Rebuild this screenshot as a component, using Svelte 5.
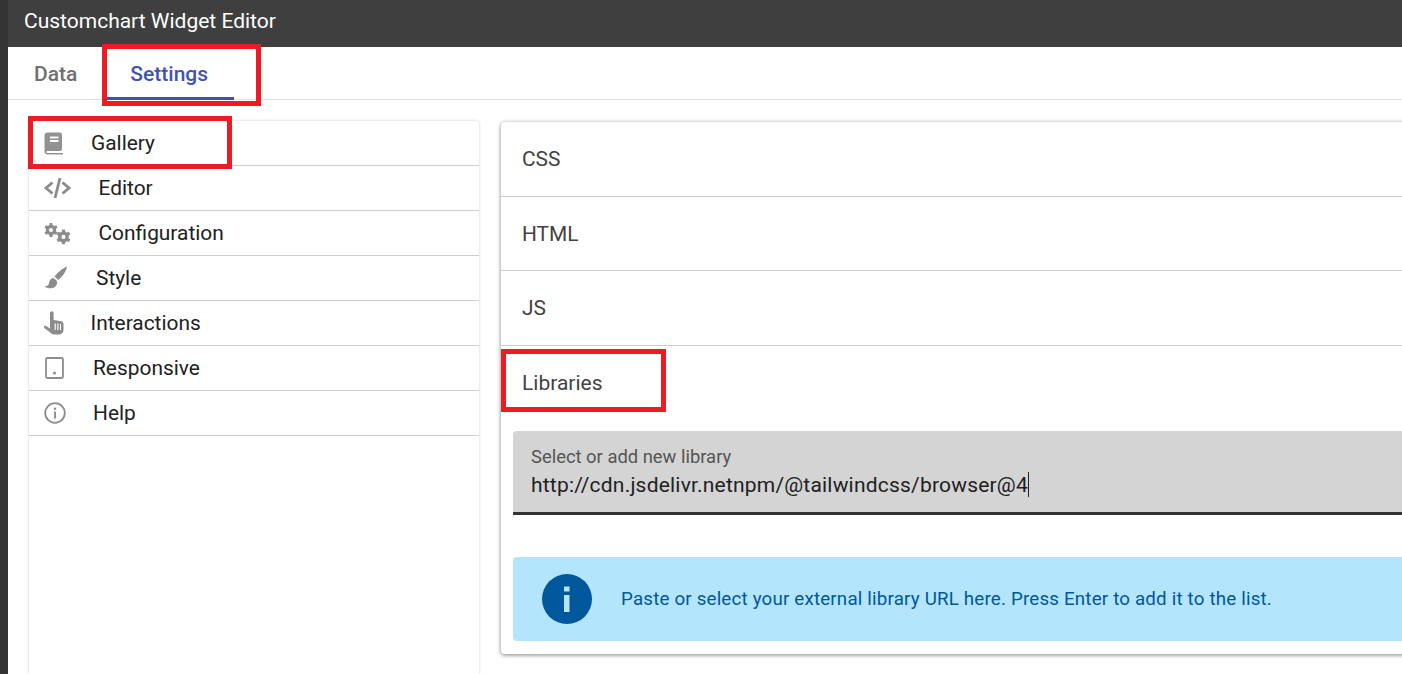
<script>
  const items = [
    { label: 'Gallery', icon: 'book', gap: 'g27' },
    { label: 'Editor', icon: 'code', gap: 'g27b' },
    { label: 'Configuration', icon: 'cogs', gap: 'g27b' },
    { label: 'Style', icon: 'brush', gap: 'g25' },
    { label: 'Interactions', icon: 'hand', gap: 'g19' },
    { label: 'Responsive', icon: 'tablet', gap: 'g22' },
    { label: 'Help', icon: 'info', gap: 'g22' }
  ];
  const sections = ['CSS', 'HTML', 'JS'];
  const gear = 'M10.3 1h-2.6l-.4 2a6 6 0 0 0-1.5.9l-2-.7L2.500 5.500l1.500 1.300a6 6 0 0 0 0 2.400l-1.500 1.300 1.300 2.300 2-.7a6 6 0 0 0 1.500.9l.4 2h2.600l.4-2a6 6 0 0 0 1.500-.9l2 .7 1.300-2.300-1.500-1.300a6 6 0 0 0 0-2.400l1.500-1.300-1.300-2.300-2 .7a6 6 0 0 0-1.500-.9zM9 6a2 2 0 1 1 0 4 2 2 0 0 1 0-4z';
</script>

<div class="page">
  <div class="strip"></div>
  <div class="main">
    <header class="title">Customchart Widget Editor</header>
    <nav class="tabs">
      <span class="tab">Data</span>
      <span class="tab active">Settings<span class="mark mark-tab"></span></span>
    </nav>
    <div class="content">
      <aside class="side">
        {#each items as item}
          <div class="row">
            <span class="ico">
              {#if item.icon === 'book'}
                <svg width="22" height="24" viewBox="0 0 22 24"><path fill="#929292" fill-rule="evenodd" d="M4.500 1.500h12a2.500 2.500 0 0 1 2.500 2.500v14a2 2 0 0 1-2 2H4.500a1 1 0 0 0 0 2H20v1.500H5A3.500 3.500 0 0 1 1.500 20V4.500a3 3 0 0 1 3-3zm2.500 4v2h8.500v-2zm0 3.500v2h8.500V9z"/></svg>
              {:else if item.icon === 'code'}
                <svg width="28" height="24" viewBox="0 0 28 24"><path fill="none" stroke="#8c8c8c" stroke-width="2.800" d="M9.500 6.500 3 12l6.500 5.500M19.500 6.500 26 12l-6.500 5.500"/><path fill="none" stroke="#8c8c8c" stroke-width="2.800" d="M17 2 12 22"/></svg>
              {:else if item.icon === 'cogs'}
                <svg width="28" height="24" viewBox="0 0 28 24"><path fill="#8c8c8c" fill-rule="evenodd" transform="translate(-1 1)" d={gear}/><path fill="#8c8c8c" fill-rule="evenodd" transform="translate(11 7.500) scale(1.050)" d={gear}/></svg>
              {:else if item.icon === 'brush'}
                <svg width="26" height="24" viewBox="0 0 26 24"><path fill="#8c8c8c" d="M24 0.500c-4.500 2-10 6.500-12.500 10l4 3.500c4-3.500 8-9 8.500-13.500zM10.500 12c-3.500.5-4 3-4.500 5.500-.4 1.700-2.200 2.800-4.500 3.300 4 2.300 9.500 1.900 11.700-1.100 1.300-1.900 1.100-3.900.5-4.900z"/></svg>
              {:else if item.icon === 'hand'}
                <svg width="22" height="26" viewBox="0 0 22 26"><path fill="#8c8c8c" fill-rule="evenodd" d="M7 3a1.800 1.800 0 0 1 3.600 0v7l7.600 1.300c1.300.2 2.300 1.200 2.300 2.500V20c0 2.800-2.200 4.500-4.500 4.500h-5c-1.700 0-2.800-.8-3.800-2L1.200 18c-.9-1.200.6-2.800 2-2L7 18.500zM11.700 13.500v6.500h1.100v-6.500zm2.600 0v6.500h1.100v-6.500zm2.600.5v6H18v-6z"/></svg>
              {:else if item.icon === 'tablet'}
                <svg width="22" height="24" viewBox="0 0 22 24"><rect x="3" y="2" width="17" height="20" rx="1.500" fill="none" stroke="#8c8c8c" stroke-width="1.800"/><circle cx="11.500" cy="17" r="1.500" fill="#8c8c8c"/></svg>
              {:else}
                <svg width="24" height="24" viewBox="0 0 24 24"><circle cx="12" cy="12" r="9.800" fill="none" stroke="#8c8c8c" stroke-width="1.800"/><circle cx="12" cy="7.800" r="1.200" fill="#8c8c8c"/><path stroke="#8c8c8c" stroke-width="1.900" d="M12 10.500v7"/></svg>
              {/if}
            </span>
            <span class={'lbl ' + item.gap}>{item.label}</span>
          </div>
        {/each}
      </aside>
      <section class="panel">
        {#each sections as s}
          <div class="sec">{s}</div>
        {/each}
        <div class="lib">Libraries</div>
        <div class="field">
          <div class="field-label">Select or add new library</div>
          <div class="field-value">http://cdn.jsdelivr.netnpm/@tailwindcss/browser@4<span class="caret"></span></div>
        </div>
        <div class="alert">
          <svg class="alert-ico" width="50" height="50" viewBox="0 0 50 50"><circle cx="25" cy="25" r="25" fill="#01579b"/><rect x="22" y="12.500" width="5.500" height="5" fill="#b3e5fc"/><rect x="22" y="21" width="5.500" height="17" fill="#b3e5fc"/></svg>
          <span class="alert-text">Paste or select your external library URL here. Press Enter to add it to the list.</span>
        </div>
      </section>
    </div>
  </div>
  <span class="mark mark-gallery"></span>
  <span class="mark mark-libs"></span>
</div>

<style>
  :global(body) { margin: 0; background: #fff; overflow: hidden; }
  .page { position: relative; display: flex; width: 1402px; height: 674px; overflow: hidden; font-family: Roboto, sans-serif; }
  .strip { width: 8px; flex: none; background: #333; }
  .main { flex: 1; min-width: 0; display: flex; flex-direction: column; }
  .title { height: 47px; flex: none; box-sizing: border-box; background: #3f3f3f; color: #fff; font-size: 21px; line-height: 43px; padding-left: 16px; }
  .tabs { height: 53px; flex: none; box-sizing: border-box; display: flex; border-bottom: 1px solid #e0e0e0; padding-left: 5px; }
  .tab { font-size: 21px; font-weight: 500; color: #6f6f6f; line-height: 54px; padding: 0 22px 0 21px; }
  .tab.active { position: relative; color: #3f51b5; padding: 0 26px 0 23px; border-bottom: 3px solid #3f51b5; height: 50px; margin-left: 8px; }
  .content { flex: 1; display: flex; min-height: 0; padding: 21px 0 0 21px; gap: 22px; }
  .side { width: 450px; flex: none; box-sizing: border-box; border-radius: 4px 4px 0 0; box-shadow: 0 0 3px rgba(0,0,0,.22); }
  .row { height: 45px; box-sizing: border-box; border-bottom: 1px solid #cdcdcd; display: flex; align-items: center; padding-left: 14px; font-size: 20.900px; color: #212121; }
  .ico { display: flex; width: 30px; flex: none; }
  .g27 { margin-left: 18px; }
  .g27b { margin-left: 25.500px; }
  .g25 { margin-left: 23px; }
  .g19 { margin-left: 17.500px; }
  .g22 { margin-left: 20px; }
  .panel { flex: 1; min-width: 0; height: 532px; margin-top: 1px; box-sizing: border-box; border-radius: 4px; margin-right: -8px; box-shadow: 0 1px 4px rgba(0,0,0,.5); }
  .sec { height: 74.500px; box-sizing: border-box; border-bottom: 1px solid #cdcdcd; padding-left: 21px; font-size: 20.900px; line-height: 74px; color: #424242; }
  .lib { height: 85px; padding-left: 21px; font-size: 21px; line-height: 75px; color: #424242; }
  .field { height: 84px; box-sizing: border-box; margin-left: 12px; padding: 15px 0 0 18px; background: #d4d4d4; border-bottom: 3px solid #333; border-radius: 4px 0 0 0; }
  .field-label { font-size: 18.400px; line-height: 22px; color: #555; }
  .field-value { font-size: 21px; line-height: 34px; color: #212121; letter-spacing: .2px; }
  .caret { display: inline-block; width: 1px; height: 25px; background: #212121; vertical-align: -5px; }
  .alert { display: flex; align-items: center; height: 84px; box-sizing: border-box; margin: 42px 0 0 12px; padding-left: 29px; background: #b3e5fc; border-radius: 4px 0 0 4px; color: #01579b; }
  .alert-ico { flex: none; }
  .alert-text { margin-left: 29px; font-size: 18.750px; letter-spacing: .18px; }
  .mark { position: absolute; border: 5px solid #ed1c24; box-sizing: border-box; pointer-events: none; }
  .mark-tab { left: -5px; top: -3px; width: 159px; height: 62px; }
  .mark-gallery { left: 28px; top: 116px; width: 204px; height: 53px; }
  .mark-libs { left: 501px; top: 349px; width: 165px; height: 63px; }
</style>
